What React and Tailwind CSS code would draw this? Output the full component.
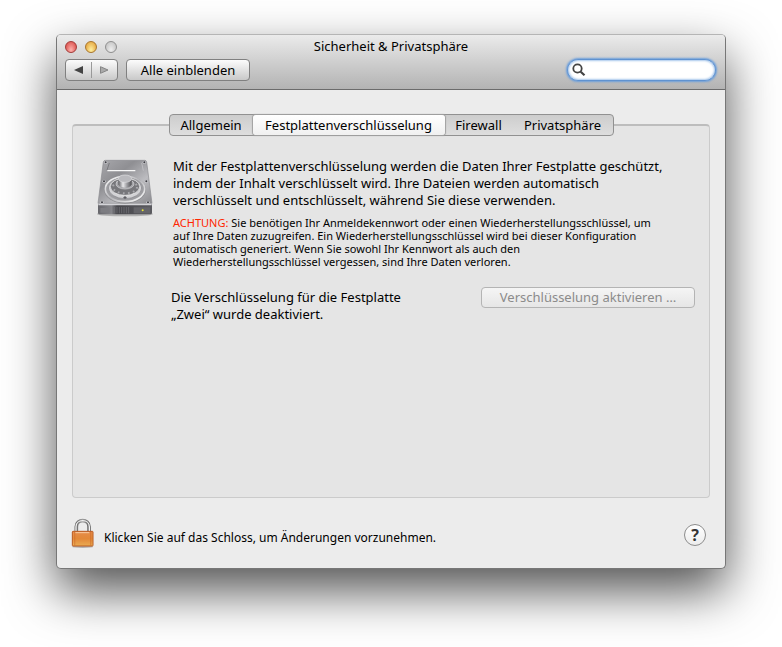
import React from 'react';

const LINES = [0, 1, 2, 3, 4, 5, 6];

function DriveIcon() {
  return (
    <svg viewBox="0 0 210 216" className="h-[72px] w-[70px] shrink-0" aria-hidden="true">
      <defs>
        <linearGradient id="face" x1="0" y1="0" x2="1" y2="1">
          <stop offset="0" stopColor="#a9a9ad" />
          <stop offset="0.35" stopColor="#8f8f93" />
          <stop offset="0.65" stopColor="#bcbcc0" />
          <stop offset="1" stopColor="#8a8a8e" />
        </linearGradient>
        <linearGradient id="front" x1="0" y1="0" x2="1" y2="0">
          <stop offset="0" stopColor="#66666b" />
          <stop offset="0.25" stopColor="#85858a" />
          <stop offset="0.35" stopColor="#47474c" />
          <stop offset="1" stopColor="#5b5b60" />
        </linearGradient>
        <linearGradient id="ring" x1="0" y1="0" x2="1" y2="1">
          <stop offset="0" stopColor="#ffffff" />
          <stop offset="0.5" stopColor="#b5b5b9" />
          <stop offset="1" stopColor="#ffffff" />
        </linearGradient>
        <linearGradient id="knob" x1="0" y1="0" x2="1" y2="0">
          <stop offset="0" stopColor="#5c5c60" />
          <stop offset="0.35" stopColor="#e9e9eb" />
          <stop offset="0.65" stopColor="#9b9b9f" />
          <stop offset="1" stopColor="#505054" />
        </linearGradient>
      </defs>
      <ellipse cx="105" cy="192" rx="84" ry="7" fill="#000" opacity="0.22" />
      <path d="M46 31H164Q169 31 170 36L186 160H24L40 36Q41 31 46 31Z" fill="url(#face)" stroke="#8b8b8f" strokeWidth="2" />
      <path d="M24 162H186V188Q186 193 181 193H29Q24 193 24 188Z" fill="url(#front)" />
      <path d="M25 164H185" stroke="#d4d4d8" strokeWidth="4" />
      <path d="M52 62H136" fill="none" stroke="#f8f8f8" strokeWidth="4" />
      <path d="M58 39L51 60" fill="none" stroke="#66666b" strokeWidth="2" />
      <path d="M155 39L160 62" fill="none" stroke="#c9c9cd" strokeWidth="2" />
      <ellipse cx="105" cy="119" rx="63" ry="42" fill="#808084" opacity="0.6" />
      <ellipse cx="105" cy="117" rx="59" ry="38" fill="#9d9da1" stroke="url(#ring)" strokeWidth="5" />
      <ellipse cx="105" cy="114" rx="50" ry="32" fill="#d2d2d5" stroke="#85858a" strokeWidth="2" />
      <ellipse cx="105" cy="110" rx="44" ry="26" fill="#77777b" stroke="#f2f2f2" strokeWidth="2" />
      <ellipse cx="105" cy="111" rx="36" ry="19" fill="none" stroke="#a9a9ad" strokeWidth="6" strokeDasharray="5 10" />
      <ellipse cx="105" cy="102" rx="27" ry="15" fill="#a5a5a9" stroke="#d5d5d8" strokeWidth="2" />
      <path d="M85 87V103Q88 113 105 113Q122 113 125 103V87Z" fill="url(#knob)" />
      <ellipse cx="105" cy="86" rx="20" ry="11" fill="#b9b9bd" stroke="#dcdcdf" strokeWidth="2" />
      <path d="M100 143H110M105 138V147" stroke="#55555a" strokeWidth="3" />
      {[[47, 37], [163, 37], [42, 94], [169, 94], [36, 157], [174, 157]].map(([x, y]) => (
        <g key={`${x}-${y}`}>
          <circle cx={x} cy={y} r="5" fill="#c9c9cd" />
          <circle cx={x} cy={y} r="3" fill="#3d3d42" />
        </g>
      ))}
      <path d="M31 174H58V188H31Z" fill="#7d7d82" />
      {LINES.map((n) => (
        <path key={n} d={`M${74 + n * 7} 171V190`} stroke="#77777c" strokeWidth="2" />
      ))}
      <path d="M131 172H180V190H131Z" fill="#65656a" />
      <circle cx="158" cy="181" r="3" fill="#e8e635" />
    </svg>
  );
}

function LockIcon() {
  return (
    <svg viewBox="60 108 78 96" className="h-8 w-[26px]" aria-hidden="true">
      <defs>
        <linearGradient id="brass" x1="0" y1="0" x2="0" y2="1">
          <stop offset="0" stopColor="#ee9a58" />
          <stop offset="0.5" stopColor="#ea9440" />
          <stop offset="1" stopColor="#f3c264" />
        </linearGradient>
        <linearGradient id="steel" x1="0" y1="0" x2="1" y2="0">
          <stop offset="0" stopColor="#6c6c6c" />
          <stop offset="0.5" stopColor="#a0a0a0" />
          <stop offset="1" stopColor="#666" />
        </linearGradient>
      </defs>
      <ellipse cx="98" cy="197" rx="32" ry="4" fill="#000" opacity="0.25" />
      <path d="M79 152V137C79 113 117 113 117 137V152" fill="none" stroke="url(#steel)" strokeWidth="11" />
      <path d="M78 152V137C78 113 118 113 118 137V152" fill="none" stroke="#f3f3f3" strokeWidth="4" />
      <rect x="67" y="151" width="62" height="44" rx="2" fill="url(#brass)" stroke="#b9581f" strokeWidth="3" />
      {LINES.map((n) => (
        <path key={n} d={`M70 ${156 + n * 6}H126`} stroke="#cd6522" strokeWidth="2" opacity="0.7" />
      ))}
      <path d="M74 153V193M122 153V193" stroke="#c25a20" strokeWidth="4" opacity="0.35" />
      <path d="M76 155H118" stroke="#ffdcb8" strokeWidth="3" opacity="0.8" />
    </svg>
  );
}

const TABS = [
  { label: 'Allgemein', width: 'w-[83px]' },
  { label: 'Festplattenverschlüsselung', width: 'w-[192px]', active: true },
  { label: 'Firewall', width: 'w-[68px]' },
  { label: 'Privatsphäre', width: 'w-[100px]' },
];

const LIGHTS = [
  { label: 'Schließen', style: 'border-[#a33b38] bg-radial-[at_50%_80%] from-[#ffb3ae] to-[#d4403c]' },
  { label: 'Minimieren', style: 'border-[#a8752c] bg-radial-[at_50%_80%] from-[#fff0a0] to-[#e0982c]' },
  { label: 'Zoomen', style: 'border-[#8f8f8f] bg-radial-[at_50%_80%] from-[#eeeeee] to-[#bcbcbc]' },
];

const BUTTON = 'rounded-[4px] border border-[#808080] bg-linear-to-b from-[#fcfcfc] to-[#c9c9c9]';

export default function App() {
  return (
    <div className="min-h-screen overflow-hidden bg-white px-14 pt-[34px] pb-[78px] font-['Noto_Sans',sans-serif] text-[13px] leading-[17px] text-black">
      <main className="overflow-clip rounded-[5px] border border-[#777] border-t-[#b5b5b5] bg-[#ececec] shadow-[0_22px_50px_rgba(0,0,0,0.68)]">
        <header className="border-b border-[#6b6b6b] bg-linear-to-b from-[#ebebeb] to-[#b3b3b3] px-2 pb-2">
          <div className="grid h-6 grid-cols-[1fr_auto_1fr] items-center">
            <div className="flex gap-2">
              {LIGHTS.map((l) => (
                <button key={l.label} aria-label={l.label} className={`size-3 rounded-full border ${l.style}`} />
              ))}
            </div>
            <h1 className="pb-0.5">Sicherheit &amp; Privatsphäre</h1>
          </div>
          <div className="flex h-[22px] items-stretch gap-2">
            <div className={`flex w-[53px] items-center ${BUTTON}`}>
              <button aria-label="Zurück" className="flex flex-1 justify-center">
                <svg viewBox="0 0 9 8" className="h-2 w-[9px]"><path d="M0 4L9 0V8Z" fill="#444" /></svg>
              </button>
              <span className="h-4 w-px bg-[#999]" />
              <button aria-label="Vorwärts" className="flex flex-1 justify-center">
                <svg viewBox="0 0 9 8" className="h-2 w-[9px]"><path d="M.5 .7L8 4L.5 7.3Z" fill="#aaa" stroke="#858585" /></svg>
              </button>
            </div>
            <button className={`w-[124px] ${BUTTON}`}>Alle einblenden</button>
            <label className="mr-px ml-auto flex w-[149px] items-center rounded-full border border-[#5f92d0] bg-white px-1 shadow-[0_0_2px_1px_#6c9fdc,inset_0_0_2px_1px_#a9c8ec]">
              <svg viewBox="0 0 14 14" className="size-[14px] shrink-0" fill="none" stroke="#444" aria-hidden="true">
                <circle cx="5.5" cy="5.5" r="4.2" strokeWidth="1.8" />
                <path d="M8.7 8.7L12.5 12.3" strokeWidth="2.2" />
              </svg>
              <input type="search" aria-label="Suchen" className="w-full min-w-0 bg-transparent px-1 outline-none" />
            </label>
          </div>
        </header>

        <div className="px-[15px] pt-6">
          <div role="tablist" className="relative z-10 mx-auto flex h-[22px] w-fit rounded-[4px] border border-[#919191] bg-linear-to-b from-[#cdcdcd] to-[#dedede]">
            {TABS.map((t) => (
              <button
                key={t.label}
                role="tab"
                aria-selected={!!t.active}
                className={`${t.width} whitespace-nowrap ${t.active ? 'rounded-[3px] bg-linear-to-b from-white to-[#f0f0f0] shadow-[0_0_1px_1px_#a0a0a0]' : ''}`}
              >
                {t.label}
              </button>
            ))}
          </div>

          <section className="-mt-3 min-h-[374px] rounded-[4px] border border-t-2 border-[#cbcbcb] border-t-[#bdbdbd] bg-[#e5e5e5] pt-6 pr-3.5 pl-[17px]">
            <div className="flex gap-[13px]">
              <DriveIcon />
              <div className="flex-1 pt-2">
                <p>
                  Mit der Festplattenverschlüsselung werden die Daten Ihrer Festplatte geschützt,<br />
                  indem der Inhalt verschlüsselt wird. Ihre Dateien werden automatisch<br />
                  verschlüsselt und entschlüsselt, während Sie diese verwenden.
                </p>
                <p className="mt-[7px] text-[11px] leading-[13px]">
                  <span className="text-[#ff2600]">ACHTUNG:</span> Sie benötigen Ihr Anmeldekennwort oder einen Wiederherstellungsschlüssel, um<br />
                  auf Ihre Daten zuzugreifen. Ein Wiederherstellungsschlüssel wird bei dieser Konfiguration<br />
                  automatisch generiert. Wenn Sie sowohl Ihr Kennwort als auch den<br />
                  Wiederherstellungsschlüssel vergessen, sind Ihre Daten verloren.
                </p>
              </div>
            </div>
            <div className="mt-[19px] flex items-start justify-between pl-[81px]">
              <p className="pt-0.5">
                Die Verschlüsselung für die Festplatte<br />
                „Zwei“ wurde deaktiviert.
              </p>
              <button disabled className="h-[21px] w-[214px] rounded-[4px] border border-[#b4b4b4] bg-linear-to-b from-[#f5f5f5] to-[#e6e6e6] text-[#8b8b8b]">
                Verschlüsselung aktivieren …
              </button>
            </div>
          </section>
        </div>

        <footer className="flex h-[70px] items-center pt-1 pr-[19px] pl-[13px]">
          <button aria-label="Schloss" className="mb-1"><LockIcon /></button>
          <p className="ml-2 pt-1 text-[12px]">Klicken Sie auf das Schloss, um Änderungen vorzunehmen.</p>
          <button aria-label="Hilfe" className="ml-auto flex size-[22px] items-center justify-center rounded-full border border-[#8c8c8c] bg-linear-to-b from-white to-[#ececec] text-[16px] font-bold text-[#333]">
            ?
          </button>
        </footer>
      </main>
    </div>
  );
}
